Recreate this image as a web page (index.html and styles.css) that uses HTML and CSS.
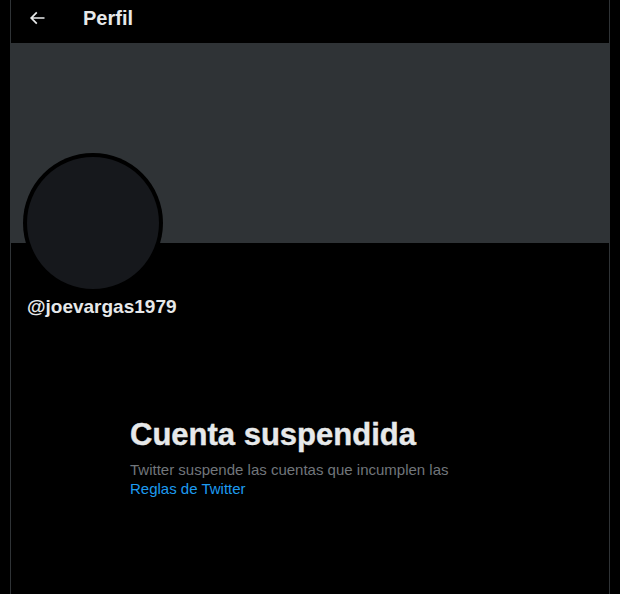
FILE: index.html
```html
<!DOCTYPE html>
<html lang="es">
<head>
<meta charset="utf-8">
<title>Perfil</title>
<link rel="stylesheet" href="styles.css">
</head>
<body>
<main class="column">
  <header class="topbar">
    <button class="back" aria-label="Atrás">
      <svg viewBox="0 0 24 24" width="20" height="20"><path d="M7.414 13l5.043 5.04-1.414 1.42L3.586 12l7.457-7.46 1.414 1.42L7.414 11H21v2H7.414z" fill="currentColor"/></svg>
    </button>
    <h1 class="title">Perfil</h1>
  </header>
  <div class="banner"></div>
  <section class="profile">
    <div class="avatar"><div class="avatar-fill"></div></div>
    <div class="handle">@joevargas1979</div>
  </section>
  <section class="notice">
    <div class="notice-body">
      <h2 class="notice-title">Cuenta suspendida</h2>
      <p class="notice-text">Twitter suspende las cuentas que incumplen las <a href="#" class="link">Reglas de Twitter</a></p>
    </div>
  </section>
</main>
</body>
</html>
```
FILE: styles.css
```css
html, body {
  margin: 0;
  padding: 0;
  background: #000;
  color: #e7e9ea;
  font-family: "Liberation Sans", Arial, sans-serif;
}

.column {
  margin-left: 10px;
  width: 598px;
  min-height: 594px;
  border-left: 1px solid #2f3336;
  border-right: 1px solid #2f3336;
}

.topbar {
  height: 43px;
  display: flex;
  align-items: center;
  padding: 0 16px 7px;
  box-sizing: border-box;
}

.back {
  width: 20px;
  height: 20px;
  padding: 0;
  margin: 0;
  border: 0;
  background: none;
  color: #e7e9ea;
  display: flex;
}

.title {
  margin: 0 0 0 36px;
  font-size: 20px;
  font-weight: 700;
  line-height: 24px;
}

.banner {
  height: 200px;
  background: #2f3336;
}

.profile {
  padding: 0 12px;
}

.avatar {
  width: 140px;
  height: 140px;
  margin-top: -90px;
  border-radius: 50%;
  background: #000;
  box-sizing: border-box;
  padding: 4px;
}

.avatar-fill {
  width: 100%;
  height: 100%;
  border-radius: 50%;
  background: #16181c;
}

.handle {
  margin: 2px 0 0 4px;
  font-size: 19px;
  font-weight: 700;
  line-height: 24px;
}

.notice {
  display: flex;
  justify-content: center;
  padding-top: 98px;
}

.notice-body {
  width: 360px;
}

.notice-title {
  margin: 0 0 7px;
  font-size: 31px;
  font-weight: 700;
  line-height: 36px;
  -webkit-text-stroke: 0.4px currentColor;
}

.notice-text {
  margin: 0;
  font-size: 15px;
  line-height: 19px;
  color: #71767b;
}

.link {
  color: #1d9bf0;
  text-decoration: none;
}
```
